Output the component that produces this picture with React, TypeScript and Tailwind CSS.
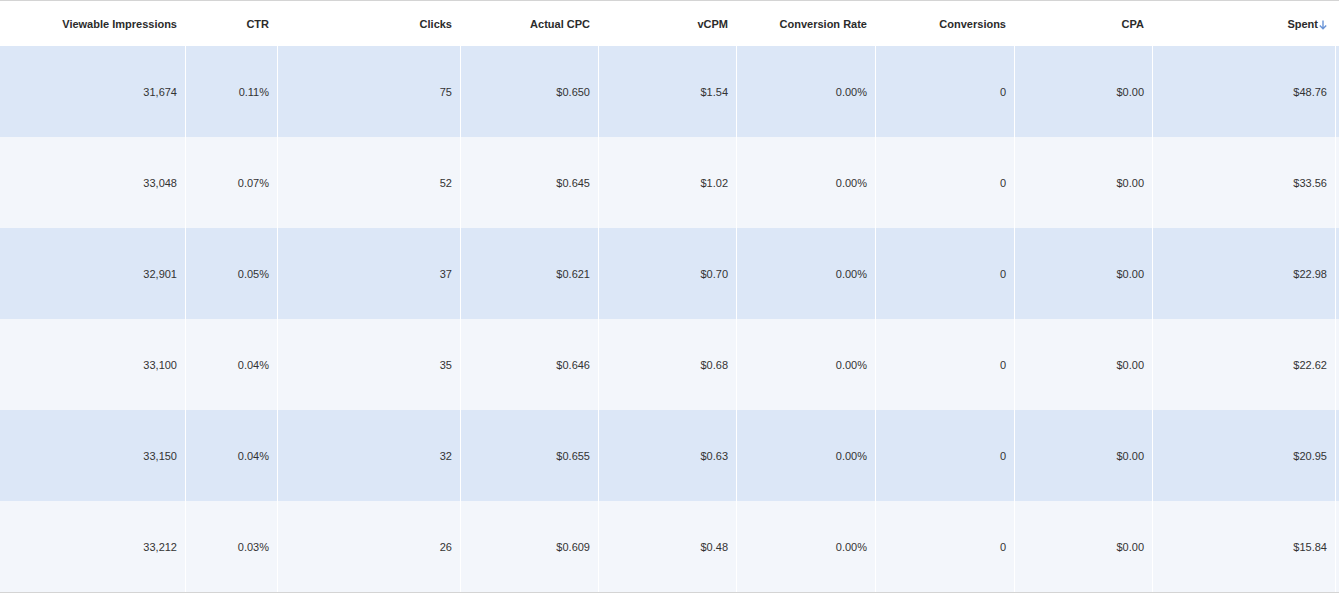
const columns = [
  { label: "Viewable Impressions", width: "w-[186px]" },
  { label: "CTR", width: "w-[92px]" },
  { label: "Clicks", width: "w-[183px]" },
  { label: "Actual CPC", width: "w-[138px]" },
  { label: "vCPM", width: "w-[138px]" },
  { label: "Conversion Rate", width: "w-[139px]" },
  { label: "Conversions", width: "w-[139px]" },
  { label: "CPA", width: "w-[138px]" },
  { label: "Spent", width: "w-[183px]", sorted: true },
  { label: "", width: "w-[120px]" },
];

const rows = [
  ["31,674", "0.11%", "75", "$0.650", "$1.54", "0.00%", "0", "$0.00", "$48.76", ""],
  ["33,048", "0.07%", "52", "$0.645", "$1.02", "0.00%", "0", "$0.00", "$33.56", ""],
  ["32,901", "0.05%", "37", "$0.621", "$0.70", "0.00%", "0", "$0.00", "$22.98", ""],
  ["33,100", "0.04%", "35", "$0.646", "$0.68", "0.00%", "0", "$0.00", "$22.62", ""],
  ["33,150", "0.04%", "32", "$0.655", "$0.63", "0.00%", "0", "$0.00", "$20.95", ""],
  ["33,212", "0.03%", "26", "$0.609", "$0.48", "0.00%", "0", "$0.00", "$15.84", ""],
];

function SortArrow() {
  return (
    <svg width="8" height="10" viewBox="0 0 8 10" className="ml-[1px] mt-[1px]">
      <path d="M4 0.5V8.5M0.8 5.5L4 8.8L7.2 5.5" stroke="#6a94d6" strokeWidth="1.4" fill="none" />
    </svg>
  );
}

export default function App() {
  return (
    <div className="w-[1339px] h-[593px] overflow-hidden bg-white font-['Liberation_Sans',Arial,sans-serif] text-[11px] text-[#333]">
      <div className="border-t border-b border-[#d4d4d4] flex flex-col w-max">
        {/* Header */}
        <div className="flex h-[45px] bg-white">
          {columns.map((c, i) => (
            <div
              key={i}
              className={`${c.width} shrink-0 flex items-center justify-end pr-[8px] pt-[2px] font-bold text-[#2b2b2b] border-r border-white`}
            >
              {c.label}
              {c.sorted && <SortArrow />}
            </div>
          ))}
        </div>

        {/* Body */}
        {rows.map((row, r) => (
          <div
            key={r}
            className={`flex h-[91px] ${r % 2 === 0 ? "bg-[#dce7f7]" : "bg-[#f3f6fb]"}`}
          >
            {row.map((v, i) => (
              <div
                key={i}
                className={`${columns[i].width} shrink-0 flex items-center justify-end pr-[8px] pt-px border-r border-white`}
              >
                {v}
              </div>
            ))}
          </div>
        ))}
      </div>
    </div>
  );
}
